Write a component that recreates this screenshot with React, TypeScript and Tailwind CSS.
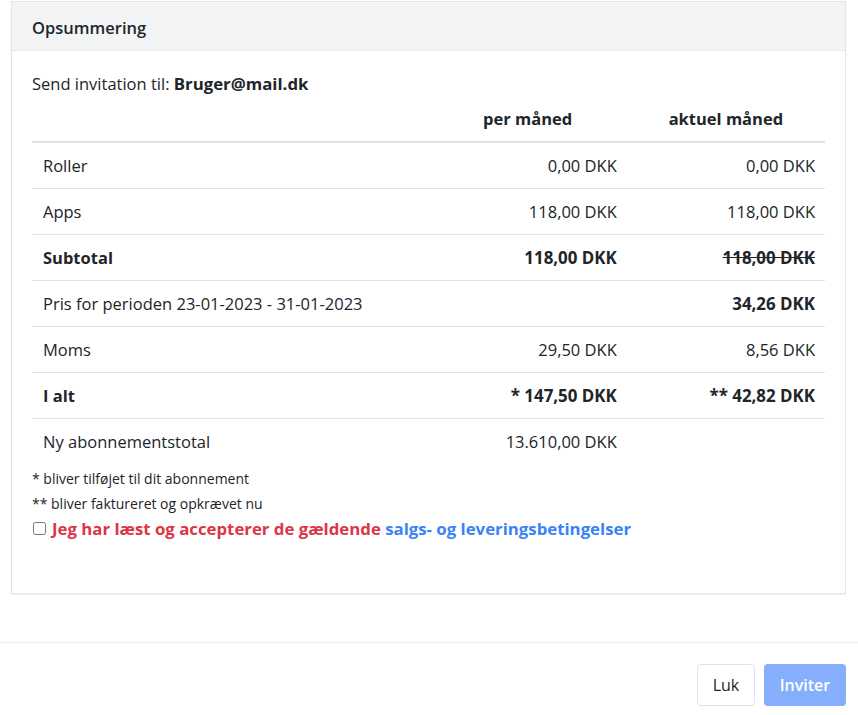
import React from 'react';

type Row = {
  label: string;
  monthly?: string;
  current?: string;
  bold?: boolean;
  boldLabel?: boolean;
  strike?: boolean;
  last?: boolean;
};

const rows: Row[] = [
  { label: 'Roller', monthly: '0,00 DKK', current: '0,00 DKK' },
  { label: 'Apps', monthly: '118,00 DKK', current: '118,00 DKK' },
  { label: 'Subtotal', monthly: '118,00 DKK', current: '118,00 DKK', bold: true, boldLabel: true, strike: true },
  { label: 'Pris for perioden 23-01-2023 - 31-01-2023', current: '34,26 DKK', bold: true },
  { label: 'Moms', monthly: '29,50 DKK', current: '8,56 DKK' },
  { label: 'I alt', monthly: '* 147,50 DKK', current: '** 42,82 DKK', bold: true, boldLabel: true },
  { label: 'Ny abonnementstotal', monthly: '13.610,00 DKK', last: true },
];

export default function App() {
  return (
    <div className="min-h-[715px] bg-white text-[#212529] font-['Open_Sans',sans-serif] text-[16.5px]">
      <div className="ml-[11px] mr-[12px] mt-px border border-[#e3e5e8] shadow-[0_1px_2px_rgba(0,0,0,0.06)]">
        <div className="h-[49px] bg-[#f3f4f6] border-b border-[#e9eaec] px-[20px] flex items-center">
          <h2 className="font-semibold text-[16.5px] pt-[4px]">Opsummering</h2>
        </div>

        <div className="px-[20px] pt-[21px] pb-[52px]">
          <p className="leading-[24px]">
            Send invitation til: <span className="font-bold text-[16.8px]">Bruger@mail.dk</span>
          </p>

          <table className="w-full border-collapse table-fixed">
            <colgroup>
              <col className="w-1/2" />
              <col className="w-1/4" />
              <col className="w-1/4" />
            </colgroup>
            <thead>
              <tr className="border-b-2 border-[#dee2e6]">
                <th />
                <th className="py-[10.5px] leading-[24px] font-bold text-center">per måned</th>
                <th className="py-[10.5px] leading-[24px] font-bold text-center">aktuel måned</th>
              </tr>
            </thead>
            <tbody>
              {rows.map((r) => (
                <tr key={r.label} className={r.last ? '' : 'border-b border-[#dee2e6]'}>
                  <td className={`py-[10.5px] px-[11px] leading-[24px] ${r.boldLabel ? 'font-bold' : ''}`}>
                    {r.label}
                  </td>
                  <td
                    className={`py-[10.5px] px-[10px] leading-[24px] text-right ${
                      r.bold ? 'font-bold text-[16.9px]' : ''
                    }`}
                  >
                    {r.monthly}
                  </td>
                  <td
                    className={`py-[10.5px] px-[10px] leading-[24px] text-right ${
                      r.bold ? 'font-bold text-[16.9px]' : ''
                    } ${r.strike ? 'line-through' : ''}`}
                  >
                    {r.current}
                  </td>
                </tr>
              ))}
            </tbody>
          </table>

          <div className="mt-[2px] text-[14px] leading-[25px]">* bliver tilføjet til dit abonnement</div>
          <div className="text-[14px] leading-[25px]">** bliver faktureret og opkrævet nu</div>
          <label className="flex items-center gap-[6px] leading-[25px] font-bold text-[16.8px]">
            <input type="checkbox" className="w-[13px] h-[13px] ml-px" />
            <span>
              <span className="text-[#dc3545]">Jeg har læst og accepterer de gældende </span>
              <a className="text-[#3b82f6]">salgs- og leveringsbetingelser</a>
            </span>
          </label>
        </div>
      </div>

      <div className="mt-[48px] border-t border-[#eeeeee] pt-[21px] pr-[12px] flex justify-end gap-[9px] text-[16px]">
        <button className="h-[42px] w-[58px] rounded-[4px] border border-[#dee2e6] bg-white text-[#212529]">
          Luk
        </button>
        <button className="h-[42px] w-[82px] rounded-[4px] bg-[#85affd] text-white font-semibold">
          Inviter
        </button>
      </div>
    </div>
  );
}
